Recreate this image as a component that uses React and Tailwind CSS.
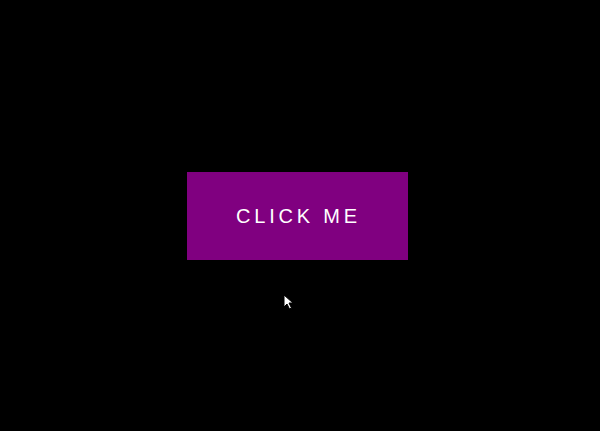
export default function App() {
  return (
    <div className="relative h-[431px] w-[600px] bg-black flex items-center justify-center font-['Liberation_Sans',Arial,sans-serif]">
      <button className="mr-[5px] mt-[1px] flex h-[88px] w-[221px] items-center justify-center bg-[#800080] pl-[2px] text-[20px] tracking-[3.8px] text-white">
        CLICK ME
      </button>

      {/* mouse pointer */}
      <svg
        className="absolute left-[283px] top-[294px]"
        width="12"
        height="16"
        viewBox="0 0 12 16"
      >
        <path
          d="M1 1 L1 13 L4 10 L6.5 15 L8.5 14 L6 9 L10 9 Z"
          fill="white"
          stroke="black"
          strokeWidth="1"
        />
      </svg>
    </div>
  )
}
